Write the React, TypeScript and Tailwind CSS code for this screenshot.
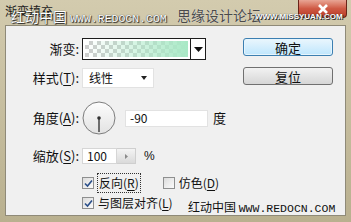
import React from 'react'

const CJK = 'font-["Noto_Sans_CJK_SC","Noto_Sans",sans-serif]'

function U({ c }: { c: string }) {
  return <span className="underline underline-offset-[2px]">{c}</span>
}

function Check({ on }: { on: boolean }) {
  return (
    <span className="flex items-center justify-center w-[12px] h-[12px] border border-[#8e8f8f] bg-gradient-to-br from-[#dcdcdc] to-[#fbfbfb]">
      {on && (
        <svg width="9" height="9" viewBox="0 0 9 9">
          <path d="M1 4.5 L3.5 7 L8 1.5" fill="none" stroke="#2a4f8a" strokeWidth="1.6" />
        </svg>
      )}
    </span>
  )
}

export default function App() {
  return (
    <div className={`w-[351px] h-[222px] flex flex-col bg-gradient-to-b from-[#d3cbae] to-[#b9b08f] overflow-hidden relative ${CJK}`}>

      {/* Title bar */}
      <div className="h-[25px] flex items-start justify-between pl-[5px] pr-[4px] relative">
        <span className="pt-[4px] text-[12px] leading-[14px] text-[#1e1e1e]">渐变填充</span>
        <span className="w-[49px] h-[18px] flex items-center justify-center rounded-b-[4px] border border-[#6a2418] border-t-0 bg-gradient-to-b from-[#e8a595] via-[#cf5a45] to-[#b83a26]">
          <svg width="12" height="10" viewBox="0 0 12 10">
            <path d="M2 1 L10 9 M10 1 L2 9" stroke="#fff" strokeWidth="2.6" />
          </svg>
        </span>
        {/* watermarks */}
        <span className="absolute left-[11px] top-[8px] text-[14px] leading-[16px] text-white [text-shadow:0_0_1px_#222,1px_1px_1px_#222] whitespace-nowrap">
          红动中国 <span className='font-["Liberation_Mono",monospace] text-[11.5px]'>WWW.REDOCN.COM</span>
        </span>
        <span className="absolute left-[177px] top-[7px] text-[14px] leading-[16px] text-[#4a4a4a] [text-shadow:0_0_1px_#eee] whitespace-nowrap">思缘设计论坛</span>
        <span className='absolute left-[255px] top-[12px] font-["Liberation_Sans",sans-serif] text-[8px] font-bold leading-[10px] text-white [text-shadow:0_0_1px_#222,1px_1px_0_#333] whitespace-nowrap'>WWW.MISSYUAN.COM</span>
      </div>

      {/* Body */}
      <div className="mx-[5px] mb-[6px] flex-1 flex bg-[#f0f0f0] border border-[#8f8a78] relative text-[13px] text-[#111]">

        {/* Left form */}
        <div className="flex-1 flex flex-col pt-[12px]">
          <div className="flex items-center h-[22px]">
            <span className="w-[73px] text-right">渐变:</span>
            <div className="ml-[3px] w-[124px] h-[22px] flex border border-[#1c1c1c] bg-white">
              <div className="flex-1 m-[2px] bg-[conic-gradient(#cdcdcd_25%,#fff_0_50%,#cdcdcd_0_75%,#fff_0)] bg-[length:8px_8px]">
                <div className="w-full h-full bg-gradient-to-r from-[#a9e9c6]/0 to-[#a9e9c6]" />
              </div>
              <div className="w-[15px] flex items-center justify-center border-l border-[#1c1c1c]">
                <svg width="9" height="5" viewBox="0 0 9 5"><path d="M0 0 H9 L4.5 5 Z" fill="#111" /></svg>
              </div>
            </div>
          </div>

          <div className="flex items-center h-[20px] mt-[8px]">
            <span className="w-[73px] text-right">样式(<U c="T" />):</span>
            <div className="ml-[3px] w-[72px] h-[20px] flex items-center justify-between bg-white border border-[#e2e2e2] pl-[6px] pr-[6px]">
              <span className="text-[12px]">线性</span>
              <svg width="6" height="4" viewBox="0 0 6 4"><path d="M0 0 H6 L3 4 Z" fill="#222" /></svg>
            </div>
          </div>

          <div className="flex items-center h-[34px] mt-[13px]">
            <span className="w-[73px] text-right">角度(<U c="A" />):</span>
            <svg className="ml-[3px]" width="34" height="34" viewBox="0 0 34 34">
              <defs>
                <linearGradient id="dial" x1="0" y1="0" x2="0" y2="1">
                  <stop offset="0" stopColor="#fdfdfd" />
                  <stop offset="1" stopColor="#e2e2e2" />
                </linearGradient>
              </defs>
              <circle cx="17" cy="17" r="16" fill="url(#dial)" stroke="#7d7d7d" strokeWidth="1" />
              <line x1="17" y1="17" x2="17" y2="31" stroke="#444" strokeWidth="1.5" />
              <circle cx="17" cy="17" r="1.8" fill="#333" />
            </svg>
            <div className="ml-[9px] w-[83px] h-[17px] bg-white border border-[#e2e2e2] pl-[4px] flex items-center text-[12px]">-90</div>
            <span className="ml-[5px]">度</span>
          </div>

          <div className="flex items-center h-[16px] mt-[13px]">
            <span className="w-[73px] text-right">缩放(<U c="S" />):</span>
            <div className="ml-[3px] w-[35px] h-[16px] bg-white border border-[#d6d6d6] pl-[4px] flex items-center text-[12px]">100</div>
            <div className="w-[19px] h-[16px] flex items-center justify-center border border-l-0 border-[#cfcfcf] bg-gradient-to-b from-[#f4f4f4] to-[#dadada]">
              <svg width="3" height="5" viewBox="0 0 3 5"><path d="M0 0 L3 2.5 L0 5 Z" fill="#8a8a8a" /></svg>
            </div>
            <span className='ml-[8px] font-["Liberation_Sans",sans-serif] text-[12px]'>%</span>
          </div>

          <div className="flex items-center h-[16px] mt-[11px] pl-[76px] text-[12px]">
            <Check on />
            <span className="ml-[3px] px-[1px] border border-dotted border-[#333]">反向(<U c="R" />)</span>
            <span className="ml-[22px]"><Check on={false} /></span>
            <span className="ml-[4px]">仿色(<U c="D" />)</span>
          </div>

          <div className="flex items-center h-[16px] mt-[4px] pl-[76px] text-[12px]">
            <Check on />
            <span className="ml-[4px]">与图层对齐(<U c="L" />)</span>
          </div>
        </div>

        {/* Buttons */}
        <div className="w-[90px] mr-[12px] pt-[12px] flex flex-col gap-[11px] text-[13px]">
          <button className="h-[18px] rounded-[3px] border border-[#3c7fb1] bg-gradient-to-b from-[#eaf6fd] to-[#bee6fd] leading-none shadow-[inset_0_0_0_1px_#e6f5fd]">确定</button>
          <button className="h-[18px] rounded-[3px] border border-[#707070] bg-gradient-to-b from-[#f2f2f2] to-[#d6d6d6] leading-none">复位</button>
        </div>

        {/* watermark */}
        <span className="absolute left-[182px] top-[173px] text-[12px] leading-[16px] text-[#111] whitespace-nowrap">
          红动中国 <span className='font-["Liberation_Mono",monospace] text-[11.5px]'>WWW.REDOCN.COM</span>
        </span>
      </div>
    </div>
  )
}
